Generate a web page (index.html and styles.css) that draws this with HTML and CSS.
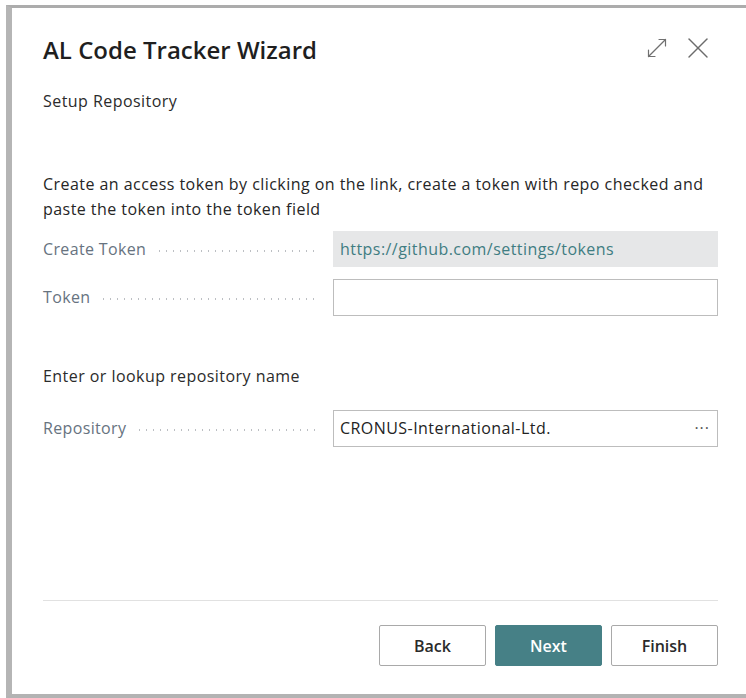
FILE: index.html
```html
<!DOCTYPE html>
<html lang="en">
<head>
<meta charset="utf-8">
<title>AL Code Tracker Wizard</title>
<link rel="stylesheet" href="styles.css">
</head>
<body>
<div class="dialog">
  <header class="dialog-header">
    <h1 class="dialog-title">AL Code Tracker Wizard</h1>
    <div class="header-actions">
      <button class="icon-btn" aria-label="Expand">
        <svg width="20" height="20" viewBox="0 0 20 20" fill="none" stroke="#707070" stroke-width="1.2" stroke-linecap="round" stroke-linejoin="round">
          <path d="M1.5 18.5 L18.5 1.5"/>
          <path d="M12 1.5 H18.5 V8"/>
          <path d="M1.5 12 V18.5 H8"/>
        </svg>
      </button>
      <button class="icon-btn" aria-label="Close">
        <svg width="20" height="20" viewBox="0 0 20 20" fill="none" stroke="#6c6c6c" stroke-width="1.4" stroke-linecap="round">
          <path d="M1 1 L19 19"/>
          <path d="M19 1 L1 19"/>
        </svg>
      </button>
    </div>
  </header>
  <div class="step-name">Setup Repository</div>

  <p class="instructions">Create an access token by clicking on the link, create a token with repo checked and paste the token into the token field</p>

  <div class="field-rows">
    <div class="field-row">
      <span class="field-label">Create Token</span>
      <span class="leader"></span>
      <div class="field-value readonly"><a class="link" href="#">https://github.com/settings/tokens</a></div>
    </div>
    <div class="field-row">
      <span class="field-label">Token</span>
      <span class="leader"></span>
      <div class="field-value input"></div>
    </div>
  </div>

  <div class="section-text">Enter or lookup repository name</div>

  <div class="field-rows repo">
    <div class="field-row">
      <span class="field-label">Repository</span>
      <span class="leader"></span>
      <div class="field-value input">
        <span>CRONUS-International-Ltd.</span>
        <span class="lookup">&middot;&middot;&middot;</span>
      </div>
    </div>
  </div>

  <footer class="dialog-footer">
    <button class="btn">Back</button>
    <button class="btn primary">Next</button>
    <button class="btn">Finish</button>
  </footer>
</div>
</body>
</html>
```

FILE: styles.css
```css
* { box-sizing: border-box; }

html, body {
  margin: 0;
  padding: 0;
  background: #ffffff;
}

body {
  font-family: "Open Sans", "Noto Sans", sans-serif;
  color: #212121;
  width: 746px;
  height: 698px;
  overflow: hidden;
}

.dialog {
  margin: 5px 0 0 6px;
  height: 693px;
  background: #ffffff;
  border-left: 6px solid #b5b5b5;
  border-top: 3px solid #acacac;
  border-bottom: 4px solid #b3b3b3;
  padding: 0 28px 0 31px;
  display: flex;
  flex-direction: column;
  font-size: 16px;
  letter-spacing: 0.45px;
}

.dialog-header {
  display: flex;
  align-items: flex-start;
  justify-content: space-between;
  padding-top: 27px;
}

.dialog-title {
  margin: 0;
  font-size: 24px;
  font-weight: 600;
  line-height: 30px;
  color: #1f1f1f;
  letter-spacing: 0;
}

.header-actions {
  display: flex;
  align-items: center;
  gap: 21px;
  margin: 3px 10px 0 0;
}

.icon-btn {
  border: 0;
  background: none;
  padding: 0;
  display: flex;
  cursor: pointer;
}

.step-name {
  margin-top: 26px;
  line-height: 20px;
  color: #2b2b2b;
}

.instructions {
  margin: 61px 0 0;
  line-height: 25px;
  color: #262626;
}

.field-rows {
  margin-top: 9px;
  display: flex;
  flex-direction: column;
  gap: 12px;
}

.field-rows.repo { margin-top: 24px; }

.field-row {
  display: flex;
  align-items: center;
  height: 36px;
}

.field-label {
  color: #67737f;
  letter-spacing: 0.35px;
  padding-right: 10px;
}

.leader {
  flex: 1;
  height: 2px;
  margin: 3px 16px 0 0;
  background-image: radial-gradient(circle, #bcbfc3 0.7px, transparent 1px);
  background-size: 7px 2px;
  background-repeat: repeat-x;
}

.field-value {
  width: 385px;
  height: 36px;
  display: flex;
  align-items: center;
  justify-content: space-between;
  padding: 0 7px;
}

.field-value.readonly {
  background: #e6e7e8;
}

.field-value.input {
  border: 1px solid #bdbdbd;
  background: #ffffff;
  padding: 0 7px 0 6px;
  height: 37px;
  color: #232323;
}

.link {
  color: #3f7d82;
  text-decoration: none;
}

.lookup {
  color: #555555;
  letter-spacing: 1px;
}

.section-text {
  margin-top: 51px;
  line-height: 20px;
  color: #2b2b2b;
}

.dialog-footer {
  margin-top: auto;
  border-top: 1px solid #e1e1e1;
  padding: 24px 0 28px;
  display: flex;
  justify-content: flex-end;
  gap: 9px;
}

.btn {
  width: 107px;
  height: 41px;
  font-family: inherit;
  font-size: 16px;
  font-weight: 600;
  color: #2a2a2a;
  background: #ffffff;
  border: 1px solid #a9a9a9;
  border-radius: 2px;
  cursor: pointer;
}

.btn.primary {
  background: #468086;
  border-color: #468086;
  color: #ffffff;
}
```
